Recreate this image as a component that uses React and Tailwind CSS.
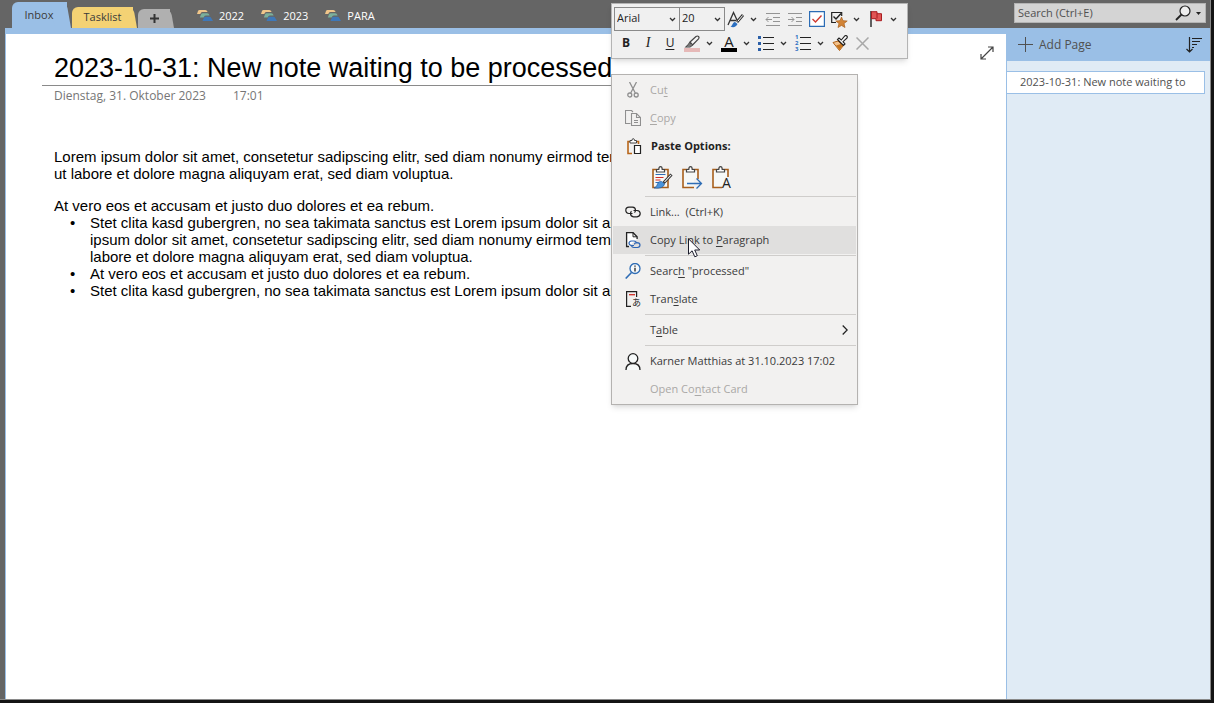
import React from "react";

function Chevron({ className = "" }) {
  return (
    <svg className={className} width="7" height="5" viewBox="0 0 7 5" fill="none" stroke="#333" strokeWidth="1.3" aria-hidden="true">
      <path d="M1 1l2.5 2.5L6 1" />
    </svg>
  );
}

function Tab({ label, color, side, size, children }) {
  return (
    <button
      aria-label={label}
      className={`relative rounded-tl-md text-[#3b3b3b] after:absolute after:top-0 after:-right-1 after:h-full after:w-4 after:origin-bottom after:skew-x-[10deg] after:rounded-tr-md ${color} ${side} ${size}`}
    >
      <span className="relative z-10">{children}</span>
    </button>
  );
}

function NotebookGroup({ name }) {
  return (
    <a href="#group" className="flex items-center gap-[6px] text-white">
      <svg width="16" height="12" viewBox="0 0 16 12" aria-hidden="true">
        <path d="M0 4l1-3q.4-1 1.500-1H8q1.500 0 2 1l.6 1H5.500Q4.300 2 3.800 3l-.5 1z" fill="#f0c68a" />
        <path d="M2.800 7.500L4 4.500q.5-1.200 1.700-1.200H10q1.500 0 2 1l.6 1.200H9Q7.700 5.500 7.200 6.500l-.5 1z" fill="#7bb09c" />
        <path d="M5.500 11l1.300-3q.5-1.200 1.700-1.200h4q1.200 0 1.700 1.200L16 11z" fill="#3f78b8" />
      </svg>
      <span className="leading-4">{name}</span>
    </a>
  );
}

function TopBar() {
  return (
    <header className="flex h-7 shrink-0 items-end justify-between pr-1 pl-3">
      <div className="flex h-full items-end">
        <div className="flex items-end">
          <Tab label="Inbox" color="bg-[#9abfe6]" side="after:bg-[#9abfe6]" size="z-10 h-[26px] w-[55px] pr-px">Inbox</Tab>
          <Tab label="Tasklist" color="bg-[#f4d274]" side="after:bg-[#f4d274]" size="ml-[5px] z-[5] h-[21px] w-[61px]">Tasklist</Tab>
          <Tab label="New section" color="bg-[#b0b0b0]" side="after:bg-[#b0b0b0]" size="ml-[5px] h-[19px] w-8">
            <svg className="mx-auto" width="9" height="9" viewBox="0 0 9 9" stroke="#333" strokeWidth="2" aria-hidden="true">
              <path d="M4.500 0v9M0 4.500h9" />
            </svg>
          </Tab>
        </div>
        <nav className="ml-[27px] flex h-full items-center gap-[17px] pt-1" aria-label="Section groups">
          <NotebookGroup name="2022" />
          <NotebookGroup name="2023" />
          <NotebookGroup name="PARA" />
        </nav>
      </div>
      <label className="mb-[5px] flex h-5 w-48 items-center border border-[#b4b4b4] bg-[#d4d4d4] pr-1 pl-[3px]">
        <input
          aria-label="Search"
          placeholder="Search (Ctrl+E)"
          className="min-w-0 flex-1 bg-transparent text-[11px] placeholder:text-[#505050] focus:outline-none"
        />
        <svg width="17" height="16" viewBox="0 0 17 16" fill="none" stroke="#222" strokeWidth="1.200" aria-hidden="true">
          <circle cx="10" cy="6" r="5" fill="#eee" />
          <path d="M6.500 9.500L1 15" strokeWidth="1.800" />
        </svg>
        <svg className="ml-1" width="5" height="3" viewBox="0 0 5 3" aria-hidden="true">
          <path d="M0 0h5L2.500 3z" fill="#222" />
        </svg>
      </label>
    </header>
  );
}

function Bullet({ children }) {
  return (
    <li className="flex">
      <span className="w-5 shrink-0" aria-hidden="true">•</span>
      <span>{children}</span>
    </li>
  );
}

function Note() {
  return (
    <main className="relative min-w-0 flex-1 border-t-[6px] border-l border-[#9abfe6] bg-white font-['Liberation_Sans',Arial,sans-serif] text-black">
      <div className="pt-[17px] pl-9">
        <h1 className="mr-[300px] border-b border-[#8a8a8a] pl-3 text-[27px] leading-[34px] whitespace-nowrap">
          2023-10-31: New note waiting to be processed
        </h1>
        <p className="flex gap-[27px] pl-3 font-['Open_Sans',sans-serif] text-xs leading-5 text-[#767676]">
          <span>Dienstag, 31. Oktober 2023</span>
          <span>17:01</span>
        </p>
        <div className="mt-[42px] pl-3 text-[15px] leading-[17px] whitespace-nowrap">
          <p>
            Lorem ipsum dolor sit amet, consetetur sadipscing elitr, sed diam nonumy eirmod tempor invidunt
            <br />
            ut labore et dolore magna aliquyam erat, sed diam voluptua.
          </p>
          <p className="mt-[15px]">At vero eos et accusam et justo duo dolores et ea rebum.</p>
          <ul className="pl-4">
            <Bullet>
              Stet clita kasd gubergren, no sea takimata sanctus est Lorem ipsum dolor sit amet. Lorem
              <br />
              ipsum dolor sit amet, consetetur sadipscing elitr, sed diam nonumy eirmod tempor invidunt ut
              <br />
              labore et dolore magna aliquyam erat, sed diam voluptua.
            </Bullet>
            <Bullet>At vero eos et accusam et justo duo dolores et ea rebum.</Bullet>
            <Bullet>Stet clita kasd gubergren, no sea takimata sanctus est Lorem ipsum dolor sit amet.</Bullet>
          </ul>
        </div>
      </div>
      <button aria-label="Full page view" className="absolute top-3 right-3">
        <svg width="14" height="14" viewBox="0 0 14 14" fill="none" stroke="#444" strokeWidth="1.200" aria-hidden="true">
          <path d="M1.500 12.500l11-11M8 1h5v5M1 8v5h5" />
        </svg>
      </button>
    </main>
  );
}

function PageList() {
  return (
    <aside className="flex w-[204px] shrink-0 flex-col border-l border-[#9abfe6] bg-[#e0ebf5]">
      <div className="flex h-[33px] items-center justify-between bg-[#9abfe6] pr-2 pl-[11px]">
        <button className="flex items-center gap-[6px] text-xs text-[#505050]">
          <svg width="15" height="15" viewBox="0 0 15 15" stroke="#505050" strokeWidth="1" aria-hidden="true">
            <path d="M7.500 0v15M0 7.500h15" />
          </svg>
          Add Page
        </button>
        <button aria-label="Sort pages">
          <svg width="16" height="16" viewBox="0 0 16 16" fill="none" stroke="#222" strokeWidth="1.200" aria-hidden="true">
            <path d="M3.500 0v15M.5 12l3 3 3-3M6 1.500h10M6 4.500h8M6 7.500h5M6 10.500h2" />
          </svg>
        </button>
      </div>
      <a
        href="#page"
        className="mt-[10px] mr-[5px] block h-[23px] border border-l-0 border-[#9abfe6] bg-white pl-[13px] text-[11px] leading-5 whitespace-nowrap text-[#505050]"
      >
        2023-10-31: New note waiting to
      </a>
    </aside>
  );
}

function ToolButton({ label, children, className = "" }) {
  return (
    <button aria-label={label} className={`flex h-6 w-[22px] shrink-0 items-center justify-center ${className}`}>
      {children}
    </button>
  );
}

function MoreButton({ label }) {
  return (
    <button aria-label={label} className="flex h-6 w-3 shrink-0 items-center justify-center">
      <Chevron />
    </button>
  );
}

function Picker({ label, options, className }) {
  return (
    <div className={`relative h-6 border border-[#8a8a8a] ${className}`}>
      <select aria-label={label} className="h-full w-full appearance-none bg-transparent pb-[2px] pl-[2px] text-[11px] text-[#222]">
        {options.map((o) => (
          <option key={o}>{o}</option>
        ))}
      </select>
      <Chevron className="pointer-events-none absolute top-[9px] right-[3px]" />
    </div>
  );
}

function MiniToolbar() {
  return (
    <div role="toolbar" aria-label="Formatting" className="absolute top-[3px] left-[611px] z-20 border border-[#b4b4b4] bg-[#f0f0f0] py-[3px] pr-2 pl-[2px] shadow-md">
      <div className="flex items-center">
        <Picker label="Font" options={["Arial"]} className="w-[66px]" />
        <Picker label="Font size" options={["20"]} className="-ml-px w-[46px]" />
        <ToolButton label="Styles">
          <svg width="18" height="17" viewBox="0 0 18 17" fill="none" aria-hidden="true">
            <path d="M1 14L6.500 1.500L10 9M3 9.500h6" stroke="#333" strokeWidth="1.300" />
            <path d="M16 4l-6 7" stroke="#333" strokeWidth="2.800" />
            <path d="M15.700 4.400l-5 6" stroke="#fff" strokeWidth="1" />
            <path d="M3.500 15.500c2 0 1.500-4 4.500-4.500l2.500 2c-1 3-4.500 4-7 2.500z" fill="#2b6fc0" />
          </svg>
        </ToolButton>
        <MoreButton label="More styles" />
        <ToolButton label="Decrease indent" className="ml-[3px]">
          <svg width="16" height="13" viewBox="0 0 16 13" fill="none" stroke="#949494" aria-hidden="true">
            <path d="M1 .5h14M8 4.500h7M8 8.500h7M1 12.500h14M1 6.500h6M3.500 4L1 6.500 3.500 9" />
          </svg>
        </ToolButton>
        <ToolButton label="Increase indent">
          <svg width="16" height="13" viewBox="0 0 16 13" fill="none" stroke="#949494" aria-hidden="true">
            <path d="M1 .5h14M9 4.500h6M9 8.500h6M1 12.500h14M1 6.500h6M4.500 4L7 6.500 4.500 9" />
          </svg>
        </ToolButton>
        <ToolButton label="To Do tag">
          <svg width="16" height="16" viewBox="0 0 16 16" fill="none" aria-hidden="true">
            <path d="M.5.5h15v15H.5z" fill="#fff" stroke="#2b6cb5" strokeWidth="1.400" />
            <path d="M3.500 8l3 3L12.500 4.500" stroke="#d03a30" strokeWidth="1.400" />
          </svg>
        </ToolButton>
        <ToolButton label="Find tags">
          <svg width="17" height="17" viewBox="0 0 17 17" fill="none" aria-hidden="true">
            <path d="M5 11.500H.7V1.500h10V5" stroke="#222" strokeWidth="1.200" />
            <path d="M2.500 5.500L5 8l5-5.500" stroke="#222" strokeWidth="1.400" />
            <path d="M10.500 6l1.500 3.700 4.200.3-3.200 2.600 1 3.900-3.500-2.100L7 16.500l1-3.900L4.800 10l4.200-.3z" fill="#d28437" stroke="#a85f1c" strokeWidth=".7" />
          </svg>
        </ToolButton>
        <MoreButton label="More tags" />
        <ToolButton label="Flag for follow up" className="ml-[3px]">
          <svg width="13" height="16" viewBox="0 0 13 16" aria-hidden="true">
            <path d="M1 0v16" stroke="#222" strokeWidth="1.400" />
            <path d="M1.500.7H7v2h4.500v7H6v-2H1.500z" fill="#e05656" stroke="#a81d20" />
            <path d="M7 2.500v5" stroke="#a81d20" />
          </svg>
        </ToolButton>
        <MoreButton label="More flags" />
      </div>
      <div className="flex items-center pl-px text-[#222]">
        <ToolButton label="Bold"><span className="text-xs font-bold">B</span></ToolButton>
        <ToolButton label="Italic"><span className="font-['Liberation_Serif',serif] text-sm italic">I</span></ToolButton>
        <ToolButton label="Underline"><span className="text-xs underline underline-offset-2">U</span></ToolButton>
        <ToolButton label="Highlight">
          <svg width="16" height="17" viewBox="0 0 16 17" fill="none" aria-hidden="true">
            <path d="M0 13h16v4H0z" fill="#e6b9b8" />
            <path d="M6 7l6-5.500q1.500-1 2.500 0t0 2.300L8.500 10zM6 7l-2 3-2 2h4l2.500-2" stroke="#444" strokeWidth="1.200" fill="#f4f4f4" />
            <path d="M5.500 8L8 10l-2 2H2.500z" fill="#777" />
          </svg>
        </ToolButton>
        <MoreButton label="Highlight colors" />
        <ToolButton label="Font color" className="ml-[3px]">
          <span className="flex h-[17px] w-4 items-center justify-center border-b-4 border-black text-[15px] leading-3">A</span>
        </ToolButton>
        <MoreButton label="Font colors" />
        <ToolButton label="Bullets" className="ml-[3px]">
          <svg width="16" height="16" viewBox="0 0 16 16" aria-hidden="true">
            <path d="M0 1h3v3H0zM0 7h3v3H0zM0 13h3v3H0z" fill="#2b5fa8" />
            <path d="M5 2.500h11M5 8.500h11M5 14.500h11" stroke="#222" />
          </svg>
        </ToolButton>
        <MoreButton label="Bullet library" />
        <ToolButton label="Numbering" className="ml-[3px]">
          <svg className="overflow-visible" width="16" height="16" viewBox="0 0 16 16" aria-hidden="true">
            <g fill="#2b6fc0" fontSize="6" fontWeight="bold" fontFamily="Open Sans">
              <text x="0" y="4">1</text>
              <text x="0" y="10">2</text>
              <text x="0" y="16">3</text>
            </g>
            <path d="M5 2.500h11M5 8.500h11M5 14.500h11" stroke="#222" />
          </svg>
        </ToolButton>
        <MoreButton label="Numbering library" />
        <ToolButton label="Format painter" className="ml-[3px]">
          <svg width="16" height="16" viewBox="0 0 16 16" fill="none" aria-hidden="true">
            <path d="M1 7.500L6 6l5 5-3.500 4.500z" fill="#f3c28c" stroke="#b06116" />
            <path d="M4 10.500L9 9l1.500 2L7.500 15z" fill="#c7761f" />
            <path d="M5.500 4.500l6 6 1.500-1.500-2-2.300L15 3q.8-1-.2-2t-2 0L9.300 5 7 3z" fill="#fff" stroke="#222" strokeWidth="1.100" />
          </svg>
        </ToolButton>
        <ToolButton label="Delete">
          <svg width="13" height="13" viewBox="0 0 13 13" stroke="#a8a8a8" strokeWidth="1.500" aria-hidden="true">
            <path d="M.5.5l12 12M12.500.5l-12 12" />
          </svg>
        </ToolButton>
      </div>
    </div>
  );
}

function ClipboardBase() {
  return (
    <>
      <path d="M2 3.500h15v18H2z" fill="#f6f8f7" stroke="#a85f1c" strokeWidth="1.600" />
      <path d="M5.500 6V3.500h2.300q0-2.800 1.700-2.800t1.700 2.800h2.300V6z" fill="#fff" stroke="#444" strokeWidth="1.200" />
    </>
  );
}

const icons = {
  cut: (
    <svg width="12" height="16" viewBox="0 0 12 16" fill="none" stroke="#8f8f8f" strokeWidth="1.300">
      <path d="M2.500 0l5.800 11M9.500 0L3.700 11" />
      <circle cx="2.800" cy="13" r="2" />
      <circle cx="9.200" cy="13" r="2" />
    </svg>
  ),
  copy: (
    <svg width="16" height="16" viewBox="0 0 16 16" fill="none" stroke="#8f8f8f" strokeWidth="1.100">
      <path d="M5.500 13.500H.5V.5h6L8 2" />
      <path d="M6.500 3.500h5l4 4v8h-9zM11.500 3.500v4h4M9 10.500h4M9 12.500h4" />
    </svg>
  ),
  paste: (
    <svg width="16" height="17" viewBox="0 0 16 17" fill="none">
      <path d="M6 15.500H2v-12h2M11 3.500h1.500V6" stroke="#b8661a" strokeWidth="1.600" />
      <path d="M4 5V2.500h2Q6 .6 7.200.6t1.300 1.900h2V5z" fill="#fff" stroke="#444" />
      <path d="M8.500 7.500h6v8h-6z" fill="#fff" stroke="#222" strokeWidth="1.200" />
    </svg>
  ),
  link: (
    <svg width="16" height="12" viewBox="0 0 16 12" fill="none" stroke="#222" strokeWidth="1.200">
      <path d="M7.500 7.500H4Q.8 7.300.8 4.300T4 1.200h3.500q3 .2 3 3.100 0 1.500-1 2.300" />
      <path d="M8.500 4.500H12q3.200.2 3.200 3.100T12 10.800H8.500q-3-.2-3-3.200 0-1.500 1-2.300" />
    </svg>
  ),
  copyLink: (
    <svg width="16" height="17" viewBox="0 0 16 17" fill="none">
      <path d="M4 14.500H1.600V.7h6.500l4 4V7" fill="#fff" stroke="#222" strokeWidth="1.300" />
      <path d="M8 .7v4.100h4" stroke="#222" />
      <path d="M9 13.500H6.500Q4 13 4 11.200T6.500 9H9q2.500.3 2.500 2.300M9.500 12.500q0-1.800 2.300-1.900Q15 10.700 15 13t-2.500 2.500H9Q6.500 15.500 6.500 13" stroke="#2f66b5" strokeWidth="1.200" />
    </svg>
  ),
  search: (
    <svg width="16" height="16" viewBox="0 0 16 16" fill="none" stroke="#2f6db5" strokeWidth="1.300">
      <circle cx="10" cy="5.500" r="5" fill="#f7fafc" />
      <path d="M6.500 9.500L.7 15.500" strokeWidth="1.600" />
      <path d="M10 4.800V8.500M10 2.500v1.200" stroke="#222" />
    </svg>
  ),
  translate: (
    <svg width="16" height="17" viewBox="0 0 16 17" fill="none">
      <path d="M6 15.300H1.600V.7h10V6" stroke="#222" strokeWidth="1.200" />
      <path d="M4 3.700h6" stroke="#d12d25" strokeWidth="1.300" />
      <text x="7" y="15" fontSize="9" fill="#222" fontFamily="Noto Sans CJK JP">あ</text>
    </svg>
  ),
  person: (
    <svg width="16" height="17" viewBox="0 0 16 17" fill="#f7fafa" stroke="#222" strokeWidth="1.300">
      <path d="M1 17q0-6.500 7-6.500t7 6.500" />
      <circle cx="8" cy="5.500" r="4.800" />
    </svg>
  ),
};

function MenuItem({ icon, disabled, active, arrow, children }) {
  return (
    <button
      role="menuitem"
      disabled={disabled}
      className={`flex h-7 w-full items-center pr-2 pl-3 text-left text-[#3b3b3b] disabled:text-[#aaa8a6] ${active ? "bg-[#e0dfde]" : ""}`}
    >
      <span className="mr-[9px] flex w-4 justify-center" aria-hidden="true">{icon}</span>
      <span className="flex-1 whitespace-pre">{children}</span>
      {arrow && (
        <svg width="6" height="10" viewBox="0 0 6 10" fill="none" stroke="#222" strokeWidth="1.300" aria-hidden="true">
          <path d="M.7.5L5.200 5 .7 9.500" />
        </svg>
      )}
    </button>
  );
}

function Key({ children }) {
  return <span className="underline underline-offset-2">{children}</span>;
}

function Separator() {
  return <div role="separator" className="my-px ml-8 h-px bg-[#cfcdcb]" />;
}

function ContextMenu() {
  return (
    <div role="menu" className="absolute top-[74px] left-[611px] z-20 w-[247px] border border-[#b4b2b0] bg-[#f2f1f0] p-px text-[11px] shadow-md">
      <MenuItem icon={icons.cut} disabled>Cu<Key>t</Key></MenuItem>
      <MenuItem icon={icons.copy} disabled><Key>C</Key>opy</MenuItem>
      <div className="flex h-7 items-center gap-[9px] pl-[13px] font-bold text-[#222]">
        <span aria-hidden="true">{icons.paste}</span>
        <span>Paste Options:</span>
      </div>
      <div className="flex h-[35px] items-center gap-[6px] pl-[38px]">
        <button aria-label="Keep source formatting" className="w-6">
          <svg width="22" height="23" viewBox="0 0 22 23" fill="none" aria-hidden="true">
            <ClipboardBase />
            <path d="M4.500 8.500h10M4.500 16.500h4" stroke="#2f6db5" strokeWidth="1.200" />
            <path d="M4.500 11.500h8M4.500 14h5" stroke="#d12d25" strokeWidth="1.200" />
            <path d="M20.500 8.500L12.500 17" stroke="#333" strokeWidth="3" />
            <path d="M20 9L13.500 16" stroke="#fff" strokeWidth="1.100" />
            <path d="M3 22q3-1 3.500-4t4-2.500l3 2.500Q12.500 23 3 22z" fill="#4a94dc" stroke="#23599b" strokeWidth=".7" />
          </svg>
        </button>
        <button aria-label="Merge formatting" className="w-6">
          <svg width="22" height="23" viewBox="0 0 22 23" fill="none" aria-hidden="true">
            <ClipboardBase />
            <path d="M13 13h6v11h-6z" fill="#f2f1f0" />
            <path d="M6 17.500h14.500M15.500 12.500l5 5-5 5" stroke="#2f6db5" strokeWidth="1.300" />
          </svg>
        </button>
        <button aria-label="Keep text only" className="w-6">
          <svg className="overflow-visible" width="22" height="23" viewBox="0 0 22 23" fill="none" aria-hidden="true">
            <ClipboardBase />
            <path d="M14 11h5v12h-8z" fill="#f2f1f0" />
            <text x="11" y="22" fontSize="14" fill="#222" fontFamily="Open Sans">A</text>
          </svg>
        </button>
      </div>
      <Separator />
      <MenuItem icon={icons.link}>{"Link...  (Ctrl+K)"}</MenuItem>
      <MenuItem icon={icons.copyLink} active>Copy Link to <Key>P</Key>aragraph</MenuItem>
      <Separator />
      <MenuItem icon={icons.search}>Searc<Key>h</Key> "processed"</MenuItem>
      <MenuItem icon={icons.translate}>Tran<Key>s</Key>late</MenuItem>
      <Separator />
      <MenuItem arrow>T<Key>a</Key>ble</MenuItem>
      <Separator />
      <MenuItem icon={icons.person}>Karner Matthias at 31.10.2023 17:02</MenuItem>
      <MenuItem disabled>Open Co<Key>n</Key>tact Card</MenuItem>
    </div>
  );
}

export default function App() {
  return (
    <div className="relative flex h-screen flex-col overflow-hidden bg-[#141414] pr-[3px] pb-[3px] font-['Open_Sans',sans-serif] text-[11px]">
      <div className="flex min-h-0 flex-1 flex-col border-r border-b border-[#8a8a8a] bg-[#656565]">
        <TopBar />
        <div className="flex min-h-0 flex-1 pl-[5px]">
          <Note />
          <PageList />
        </div>
      </div>
      <MiniToolbar />
      <ContextMenu />
      <svg className="pointer-events-none absolute top-[238px] left-[688px] z-30" width="13" height="20" viewBox="0 0 13 20" aria-hidden="true">
        <path d="M.5.8v15.400l3.600-3.400 2.700 6 2.500-1.100-2.600-5.700h5z" fill="#fff" stroke="#1a1a2a" />
      </svg>
    </div>
  );
}
